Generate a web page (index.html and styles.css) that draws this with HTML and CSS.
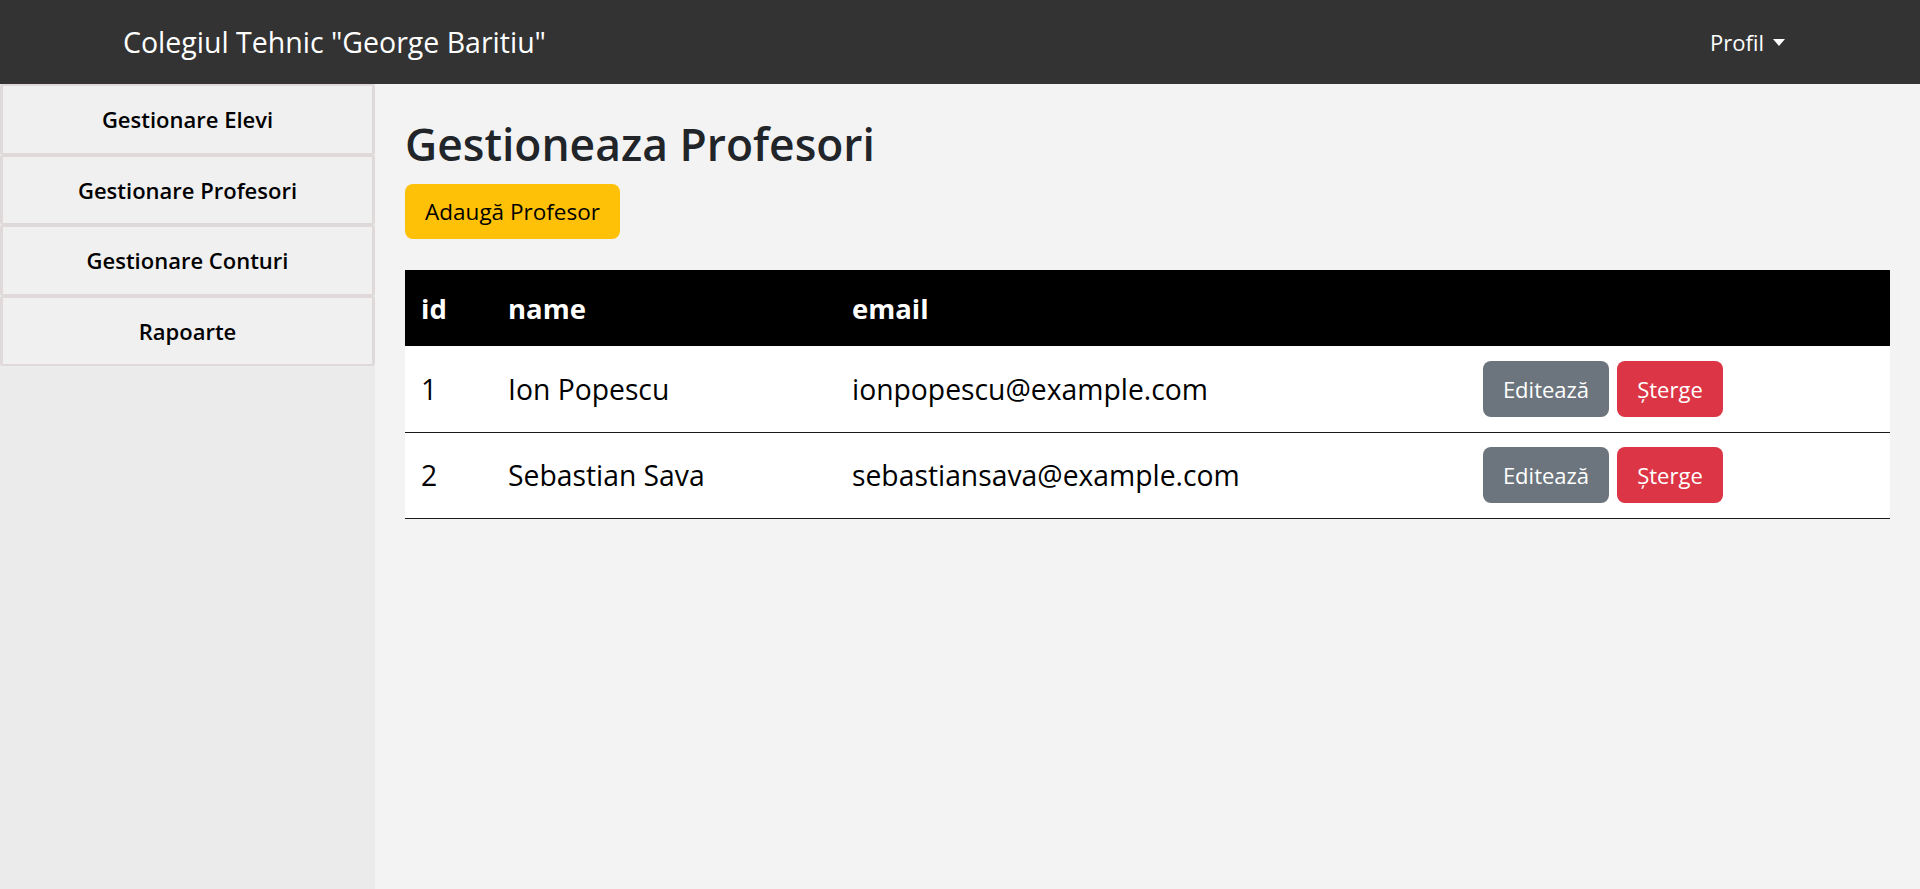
FILE: index.html
```html
<!DOCTYPE html>
<html lang="ro">
<head>
<meta charset="utf-8">
<title>Gestioneaza Profesori</title>
<link rel="stylesheet" href="styles.css">
</head>
<body>
<header class="navbar">
  <a class="brand" href="#">Colegiul Tehnic "George Baritiu"</a>
  <a class="profile" href="#">Profil<span class="caret"></span></a>
</header>
<div class="layout">
  <nav class="sidebar">
    <a class="side-link" href="#">Gestionare Elevi</a>
    <a class="side-link" href="#">Gestionare Profesori</a>
    <a class="side-link" href="#">Gestionare Conturi</a>
    <a class="side-link" href="#">Rapoarte</a>
  </nav>
  <main class="content">
    <h1 class="title">Gestioneaza Profesori</h1>
    <button class="btn btn-warning">Adaugă Profesor</button>
    <table class="data-table">
      <colgroup>
        <col class="c-id">
        <col class="c-name">
        <col class="c-email">
        <col class="c-actions">
      </colgroup>
      <thead>
        <tr><th>id</th><th>name</th><th>email</th><th></th></tr>
      </thead>
      <tbody>
        <tr>
          <td>1</td><td>Ion Popescu</td><td>ionpopescu@example.com</td>
          <td><div class="actions"><button class="btn btn-sm btn-secondary">Editează</button><button class="btn btn-sm btn-danger">Șterge</button></div></td>
        </tr>
        <tr>
          <td>2</td><td>Sebastian Sava</td><td>sebastiansava@example.com</td>
          <td><div class="actions"><button class="btn btn-sm btn-secondary">Editează</button><button class="btn btn-sm btn-danger">Șterge</button></div></td>
        </tr>
      </tbody>
    </table>
  </main>
</div>
</body>
</html>
```
FILE: styles.css
```css
* { box-sizing: border-box; }
html, body { margin: 0; padding: 0; }
body {
  font-family: "Open Sans", "Noto Sans", sans-serif;
  background: #f3f3f3;
  color: #000;
  min-height: 100vh;
  display: flex;
  flex-direction: column;
}
a { text-decoration: none; }

.navbar {
  height: 84px;
  flex: 0 0 84px;
  background: #333333;
  display: flex;
  align-items: center;
  justify-content: space-between;
  padding: 0 135px 0 123px;
}
.brand {
  color: #fff;
  font-size: 28.5px;
  line-height: 1;
}
.profile {
  color: #fff;
  font-size: 22px;
  display: flex;
  align-items: center;
}
.caret {
  display: inline-block;
  margin-left: 9px;
  width: 0;
  height: 0;
  border-top: 7px solid #fff;
  border-left: 6px solid transparent;
  border-right: 6px solid transparent;
}

.layout {
  flex: 1;
  display: flex;
}
.sidebar {
  width: 375px;
  flex: 0 0 375px;
  background: #ebebeb;
  display: flex;
  flex-direction: column;
}
.side-link {
  height: 70.5px;
  display: flex;
  align-items: center;
  justify-content: center;
  background: #f0f0f0;
  border: 2px solid #dfd9d9;
  border-left-width: 3px;
  border-right-width: 3px;
  border-radius: 3px;
  color: #000;
  font-weight: 600;
  font-size: 22px;
}

.content {
  flex: 1;
  padding: 33px 30px 0 30px;
}
.title {
  margin: 0 0 12px;
  font-size: 44.4px;
  line-height: 55px;
  font-weight: 600;
  color: #212529;
}
.btn {
  font-family: inherit;
  border: none;
  border-radius: 8px;
  cursor: pointer;
  padding: 0 20px;
}
.btn-warning {
  height: 55px;
  background: #ffc107;
  color: #000;
  font-size: 22.5px;
  width: 215px;
  padding: 0;
}
.btn-sm {
  height: 56px;
  font-size: 22px;
  color: #fff;
  padding: 0 20px;
}
.btn-secondary { background: #6c757d; width: 126px; padding: 0; }
.btn-danger { background: #dc3545; width: 106px; padding: 0; }

.data-table {
  margin-top: 31px;
  width: 100%;
  border-collapse: collapse;
  table-layout: fixed;
  font-size: 28.3px;
}
.c-id { width: 87px; }
.c-name { width: 344px; }
.c-email { width: 631px; }
.data-table th {
  background: #000;
  color: #fff;
  font-weight: 700;
  font-size: 27.5px;
  text-align: left;
  height: 76px;
  padding: 0 16px;
  vertical-align: middle;
}
.data-table td {
  background: #fff;
  height: 86px;
  padding: 0 16px;
  border-bottom: 1px solid #1a1a1a;
  vertical-align: middle;
}
.actions {
  display: flex;
  gap: 8px;
}
```
